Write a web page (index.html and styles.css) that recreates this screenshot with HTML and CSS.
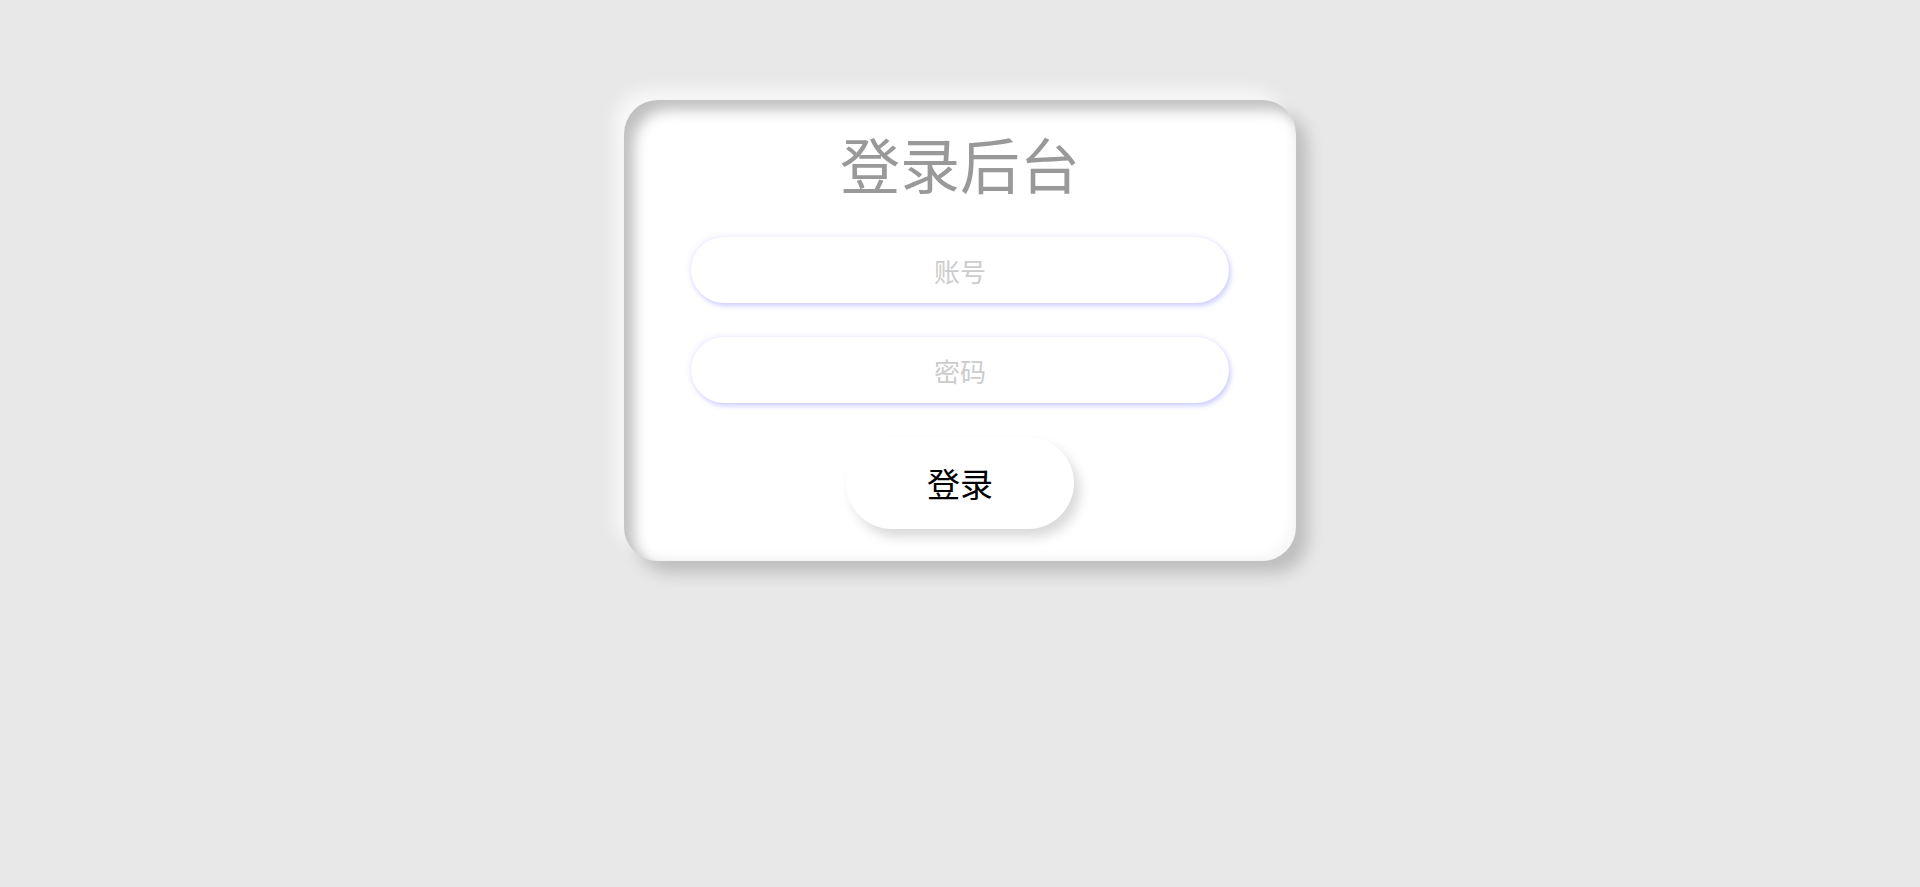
FILE: index.html
```html
<!DOCTYPE html>
<html lang="zh-CN">
<head>
<meta charset="utf-8">
<title>登录后台</title>
<link rel="stylesheet" href="styles.css">
</head>
<body>
  <div class="login-card">
    <h1 class="login-title">登录后台</h1>
    <form class="login-form">
      <input class="login-input" type="text" placeholder="账号">
      <input class="login-input" type="password" placeholder="密码">
      <button class="login-btn" type="button">登录</button>
    </form>
  </div>
</body>
</html>
```
FILE: styles.css
```css
html, body {
  margin: 0;
  padding: 0;
}

body {
  background: #e8e8e8;
  font-family: "Noto Sans CJK SC", "Noto Sans", sans-serif;
  min-height: 100vh;
}

.login-card {
  box-sizing: border-box;
  width: 672px;
  margin: 100px auto 0;
  padding: 23px 0 32px;
  background: #fff;
  border-radius: 34px;
  box-shadow:
    inset 10px 10px 14px rgba(0, 0, 0, 0.25),
    inset -6px -6px 10px rgba(0, 0, 0, 0.03),
    12px 12px 16px rgba(0, 0, 0, 0.18),
    -10px -10px 16px rgba(255, 255, 255, 0.7);
  display: flex;
  flex-direction: column;
  align-items: center;
}

.login-title {
  margin: 0;
  font-size: 60px;
  line-height: 80px;
  font-weight: 400;
  color: #999;
}

.login-form {
  width: 100%;
  margin-top: 34px;
  display: flex;
  flex-direction: column;
  align-items: center;
  gap: 34px;
}

.login-input {
  box-sizing: border-box;
  width: 538px;
  height: 66px;
  border: none;
  outline: none;
  border-radius: 33px;
  background: #fff;
  text-align: center;
  font-family: inherit;
  font-size: 26px;
  color: #333;
  box-shadow:
    2px 3px 5px rgba(120, 120, 255, 0.35),
    -2px -2px 5px rgba(190, 190, 255, 0.2);
}

.login-input::placeholder {
  color: #ccc;
}

.login-btn {
  width: 228px;
  height: 92px;
  border: none;
  border-radius: 46px;
  background: #fff;
  font-family: inherit;
  font-size: 33px;
  color: #000;
  cursor: pointer;
  box-shadow: 6px 8px 12px rgba(0, 0, 0, 0.15);
}
```
